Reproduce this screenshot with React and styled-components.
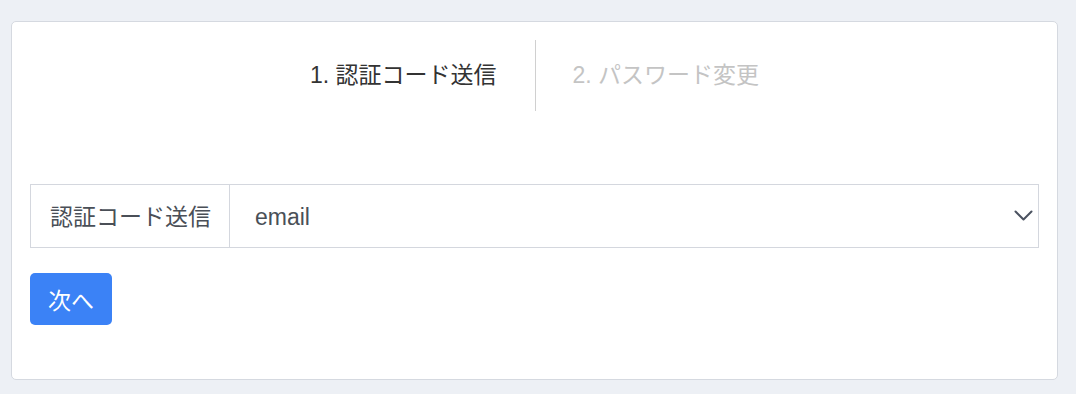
import React from 'react';
import styled, { createGlobalStyle } from 'styled-components';

const GlobalStyle = createGlobalStyle`
  html, body {
    margin: 0;
    background: #edf0f5;
    font-family: "Liberation Sans", "Noto Sans CJK JP", sans-serif;
  }
`;

const Page = styled.div`
  padding: 21px 18px 15px 11px;
`;

const Card = styled.div`
  background: #fff;
  border: 1px solid #d5d9e0;
  border-radius: 5px;
  padding: 18px 18px 54px 18px;
`;

const Steps = styled.div`
  display: flex;
  justify-content: center;
  height: 71px;
`;

const Step = styled.div`
  display: flex;
  align-items: center;
  padding-bottom: 5px;
  box-sizing: border-box;
  font-size: 23px;
  color: ${(p) => (p.$active ? '#333' : '#c4c4c4')};
  padding-left: ${(p) => (p.$first ? '0' : '37px')};
  padding-right: ${(p) => (p.$first ? '38px' : '0')};
  border-right: ${(p) => (p.$first ? '1px solid #d0d0d0' : 'none')};
  white-space: nowrap;
`;

const InputGroup = styled.div`
  display: flex;
  height: 64px;
  margin-top: 73px;
  box-sizing: border-box;
  border: 1px solid #d4d7de;
`;

const GroupLabel = styled.div`
  display: flex;
  align-items: center;
  padding: 0 18px 2px 19px;
  font-size: 23px;
  color: #4a4f57;
  border-right: 1px solid #d4d7de;
  white-space: nowrap;
`;

const SelectWrap = styled.div`
  position: relative;
  flex: 1;
  display: flex;
`;

const Select = styled.select`
  flex: 1;
  appearance: none;
  border: none;
  outline: none;
  background: #fff;
  font-family: inherit;
  font-size: 23px;
  color: #495057;
  padding: 2px 50px 0 25px;
`;

const Chevron = styled.svg`
  position: absolute;
  right: 5px;
  top: 25px;
  pointer-events: none;
`;

const Button = styled.button`
  display: block;
  margin-top: 25px;
  height: 52px;
  padding: 0 18px;
  border: none;
  border-radius: 5px;
  background: #3b82f6;
  color: #fff;
  font-family: inherit;
  font-size: 23px;
`;

export default function App() {
  return (
    <Page>
      <GlobalStyle />
      <Card>
        <Steps>
          <Step $active $first>1. 認証コード送信</Step>
          <Step>2. パスワード変更</Step>
        </Steps>
        <InputGroup>
          <GroupLabel>認証コード送信</GroupLabel>
          <SelectWrap>
            <Select defaultValue="email">
              <option value="email">email</option>
            </Select>
            <Chevron width="19" height="11" viewBox="0 0 19 11">
              <path d="M1.5 1.5 L9.5 9.5 L17.5 1.5" fill="none" stroke="#4b5260" strokeWidth="2" strokeLinecap="round" strokeLinejoin="round" />
            </Chevron>
          </SelectWrap>
        </InputGroup>
        <Button>次へ</Button>
      </Card>
    </Page>
  );
}
